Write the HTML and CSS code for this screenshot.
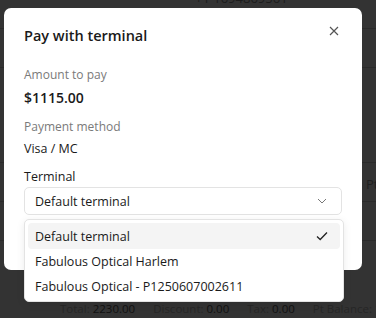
FILE: index.html
```html
<!DOCTYPE html>
<html lang="en">
<head>
    <meta charset="UTF-8">
    <meta name="viewport" content="width=device-width, initial-scale=1.0">
    <title>Pay with terminal</title>
    <link rel="stylesheet" href="styles.css">
</head>
<body>
    <div class="page">
        <div class="page-phone">+1 1694869561</div>
        <div class="page-row"></div>
        <div class="page-row tall"></div>
        <div class="page-row"><span class="page-pt">Pt</span></div>
        <div class="page-row"></div>
        <div class="page-totals">
            <span>Total: <b>2230.00</b></span>
            <span>Discount: <b>0.00</b></span>
            <span>Tax: <b>0.00</b></span>
            <span>Pt Balance: <b>1115.00</b></span>
        </div>
    </div>

    <div class="modal">
        <div class="modal-head">
            <h2>Pay with terminal</h2>
            <button class="close-btn" aria-label="Close">
                <svg width="10" height="10" viewBox="0 0 10 10"><path d="M1 1L9 9M9 1L1 9" stroke="#555" stroke-width="1.2" fill="none"/></svg>
            </button>
        </div>

        <div class="field">
            <div class="label amount-label">Amount to pay</div>
            <div class="amount">$1115.00</div>
        </div>

        <div class="field">
            <div class="label">Payment method</div>
            <div class="value">Visa / MC</div>
        </div>

        <div class="field terminal">
            <div class="value">Terminal</div>
            <div class="select">
                <span>Default terminal</span>
                <svg width="10" height="6" viewBox="0 0 10 6"><path d="M1 1L5 5L9 1" stroke="#777" stroke-width="1" fill="none"/></svg>
            </div>
            <ul class="menu">
                <li class="active">
                    <span>Default terminal</span>
                    <svg width="12" height="10" viewBox="0 0 12 10"><path d="M1 5.5L4.2 8.5L11 1.5" stroke="#222" stroke-width="1.3" fill="none"/></svg>
                </li>
                <li><span>Fabulous Optical Harlem</span></li>
                <li><span>Fabulous Optical - P1250607002611</span></li>
            </ul>
        </div>
    </div>
</body>
</html>
```

FILE: styles.css
```css
body {
    margin: 0;
    width: 376px;
    height: 318px;
    overflow: hidden;
    background-color: #333;
    font-family: "Open Sans", "Noto Sans", sans-serif;
    position: relative;
}
.page {
    height: 318px;
    display: flex;
    flex-direction: column;
    overflow: hidden;
}
.page-phone {
    margin-top: -11px;
    height: 39px;
    padding-left: 195px;
    font-size: 13px;
    color: #1c1c1c;
    border-bottom: 1px solid #2a2a2a;
}
.page-row {
    height: 38px;
    border-bottom: 1px solid #2a2a2a;
}
.page-row.tall {
    height: 94px;
}
.page-pt {
    display: block;
    padding: 12px 0 0 366px;
    font-size: 13px;
    color: #1f1f1f;
}
.page-totals {
    margin-top: auto;
    display: flex;
    gap: 18px;
    padding: 0 0 2px 60px;
    font-size: 11.5px;
    color: #262626;
    white-space: nowrap;
}
.page-totals b {
    font-weight: 400;
    color: #111;
}
.modal {
    position: absolute;
    left: 4px;
    top: 8px;
    width: 358px;
    height: 262px;
    box-sizing: border-box;
    background-color: white;
    border-radius: 7px;
    padding: 16px 20px 0 20px;
}
.modal-head {
    display: flex;
    justify-content: space-between;
    align-items: flex-start;
    margin-bottom: 21px;
}
h2 {
    margin: 2px 0 0 0;
    font-size: 14.5px;
    font-weight: 600;
    color: #1a1a1a;
}
.close-btn {
    border: none;
    background: none;
    padding: 0;
    margin: 0 2px 0 0;
    width: 12px;
    height: 12px;
    cursor: pointer;
}
.field {
    margin-bottom: 11px;
}
.label {
    font-size: 12px;
    color: #7a7a7a;
    margin-bottom: 5px;
}
.amount {
    font-size: 14px;
    font-weight: 600;
    color: #1a1a1a;
}
.value {
    font-size: 12.5px;
    color: #1a1a1a;
}
.terminal {
    position: relative;
}
.terminal .value {
    margin-bottom: 2px;
}
.select {
    height: 28px;
    box-sizing: border-box;
    border: 1px solid #e3e3e3;
    border-radius: 5px;
    padding: 0 14px 0 10px;
    display: flex;
    align-items: center;
    justify-content: space-between;
    font-size: 12.5px;
    color: #1a1a1a;
}
.menu {
    position: absolute;
    left: 0;
    top: 51px;
    width: 320px;
    box-sizing: border-box;
    margin: 0;
    padding: 3px;
    list-style: none;
    background-color: white;
    border: 1px solid #e3e3e3;
    border-radius: 5px;
    box-shadow: 0 2px 8px rgba(0,0,0,0.08);
}
.menu li {
    height: 25px;
    display: flex;
    align-items: center;
    justify-content: space-between;
    padding: 0 12px 0 7px;
    border-radius: 4px;
    font-size: 12.5px;
    color: #1a1a1a;
}
.menu li.active {
    background-color: #f4f4f4;
    height: 26px;
}
.menu li:last-child {
    height: 24px;
}
```
